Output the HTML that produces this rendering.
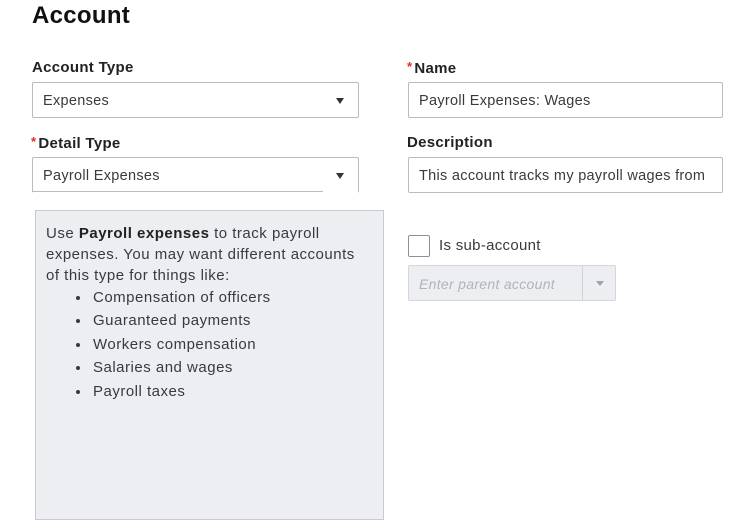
<!DOCTYPE html>
<html><head><style>
body{margin:0;width:753px;height:508px;background:#fff;font-family:"Liberation Sans",sans-serif;color:#393a3d;position:relative;overflow:hidden;letter-spacing:0.3px}
.a{position:absolute}
.lbl{font-size:15px;font-weight:bold;color:#222}
.st{color:#e0301e;font-size:13px;margin-right:2px;vertical-align:2px}
.box{position:absolute;border:1px solid #b8bcc2;border-radius:2px;box-sizing:border-box;height:36px;font-size:14.5px;line-height:36px;padding-left:10px;color:#393a3d;background:#fff}
.arr{position:absolute;right:14px;top:15px;width:0;height:0;border-left:4.5px solid transparent;border-right:4.5px solid transparent;border-top:6px solid #333}
ul{margin:0;padding-left:57px;list-style:disc}
li{height:23.4px;padding-left:0}
</style></head><body>
<div class="a" style="left:32px;top:2px;font-size:24px;font-weight:bold;color:#111">Account</div>
<div class="a lbl" style="left:32px;top:59px">Account Type</div>
<div class="box" style="left:32px;top:82px;width:327px">Expenses<div class="arr"></div></div>
<div class="a lbl" style="left:31px;top:134px"><span class="st">*</span>Detail Type</div>
<div class="box" style="left:32px;top:157px;width:327px;border-bottom-color:transparent">Payroll Expenses<div class="arr"></div></div>
<div class="a" style="left:32px;top:191px;width:291px;height:1px;background:#b8bcc2"></div>
<div class="a" style="left:35px;top:210px;width:349px;height:310px;background:#eceef1;border:1px solid #c8cbd0;box-sizing:border-box;font-size:15px;line-height:21px;padding:12px 24px 12px 10px;color:#393a3d;letter-spacing:0.5px">Use <b style="color:#222">Payroll expenses</b> to track payroll expenses. You may want different accounts of this type for things like:
<ul style="margin-left:-11px;line-height:23.4px;padding-left:56px"><li style="padding-left:2px">Compensation of officers</li><li style="padding-left:2px">Guaranteed payments</li><li style="padding-left:2px">Workers compensation</li><li style="padding-left:2px">Salaries and wages</li><li style="padding-left:2px">Payroll taxes</li></ul></div>
<div class="a lbl" style="left:407px;top:59px"><span class="st">*</span>Name</div>
<div class="box" style="left:408px;top:82px;width:315px">Payroll Expenses: Wages</div>
<div class="a lbl" style="left:407px;top:134px">Description</div>
<div class="box" style="left:408px;top:157px;width:315px;overflow:hidden;white-space:nowrap">This account tracks my payroll wages from</div>
<div class="a" style="left:408px;top:235px;width:22px;height:22px;border:1px solid #8d9096;border-radius:2px;box-sizing:border-box"></div>
<div class="a" style="left:439px;top:237px;font-size:15px;color:#393a3d">Is sub-account</div>
<div class="box" style="left:408px;top:265px;width:208px;background:#eceef1;border-color:#d4d7dc;color:#b0b3b8;font-style:italic;font-size:14px">Enter parent account
<div class="a" style="left:173px;top:0;width:1px;height:34px;background:#d0d3d8"></div>
<div class="a" style="left:187px;top:15px;width:0;height:0;border-left:4px solid transparent;border-right:4px solid transparent;border-top:5px solid #a0a3a8"></div></div>
</body></html>
